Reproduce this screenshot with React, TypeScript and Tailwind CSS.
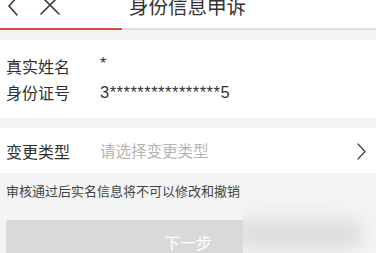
import React from "react";

const font = { fontFamily: '"Noto Sans CJK SC", "Liberation Sans", sans-serif' };

export default function App() {
  return (
    <div className="relative w-[376px] h-[253px] overflow-hidden bg-[#f4f4f4]" style={font}>
      {/* header */}
      <div className="h-[28px] bg-white">
        <div className="relative h-[12px] flex items-center">
          <svg className="absolute left-[7px] top-[-4px]" width="12" height="20" viewBox="0 0 12 20" fill="none">
            <path d="M10 1 L2 10 L10 19" stroke="#3a3a3a" strokeWidth="1.6" strokeLinecap="round" strokeLinejoin="round" />
          </svg>
          <svg className="absolute left-[39px] top-[-5px]" width="22" height="20" viewBox="0 0 22 20" fill="none">
            <path d="M2 1 L20 19 M20 1 L2 19" stroke="#3a3a3a" strokeWidth="1.6" strokeLinecap="round" />
          </svg>
          <div className="w-full text-center text-[19.5px] leading-[20px] text-[#333] pr-[1px]">身份信息申诉</div>
        </div>
      </div>
      {/* progress */}
      <div className="flex h-[2px]">
        <div className="w-[122px] bg-[#db4a3c]" />
        <div className="flex-1 bg-[#dedede]" />
      </div>
      <div className="h-[10px]" />
      {/* section 1 */}
      <div className="bg-white py-[13px] pl-[6px]">
        <div className="flex items-center h-[26px]">
          <div className="w-[94px] text-[16px] text-[#2f2f2f]">真实姓名</div>
          <div className="text-[16px] text-[#333] leading-none -mt-[4px]" style={{ fontFamily: '"Liberation Sans", sans-serif' }}>*</div>
        </div>
        <div className="flex items-center h-[26px]">
          <div className="w-[94px] text-[16px] text-[#2f2f2f]">身份证号</div>
          <div className="text-[16.5px] text-[#333] tracking-[0.5px]" style={{ fontFamily: '"Liberation Sans", sans-serif' }}>3****************5</div>
        </div>
      </div>
      <div className="h-[10px]" />
      {/* section 2 */}
      <div className="bg-white h-[45px] flex items-center pl-[6px] pr-[10px]">
        <div className="w-[94px] text-[16px] text-[#2f2f2f]">变更类型</div>
        <div className="flex-1 text-[15.5px] text-[#b4b4b4]">请选择变更类型</div>
        <svg width="9" height="17" viewBox="0 0 9 17" fill="none" className="mt-[2px]">
          <path d="M1 1 L8 8.5 L1 16" stroke="#444" strokeWidth="1.3" strokeLinecap="round" strokeLinejoin="round" />
        </svg>
      </div>
      {/* note */}
      <div className="pt-[9px] pl-[6px] text-[13px] leading-[18px] text-[#444]">审核通过后实名信息将不可以修改和撤销</div>
      {/* button */}
      <div className="mt-[20px] mx-[6px] h-[44px] rounded-[2px] bg-[#d8d9db] flex items-center justify-center text-white text-[16px]">
        下一步
      </div>
      {/* blurred overlay */}
      <div className="absolute left-[243px] top-[176px] right-0 bottom-0 bg-[#f4f4f4] overflow-hidden">
        <div className="absolute left-[-10px] top-[44px] w-[130px] h-[28px] rounded-full bg-[#dcdcdc] blur-[9px]" />
      </div>
    </div>
  );
}
